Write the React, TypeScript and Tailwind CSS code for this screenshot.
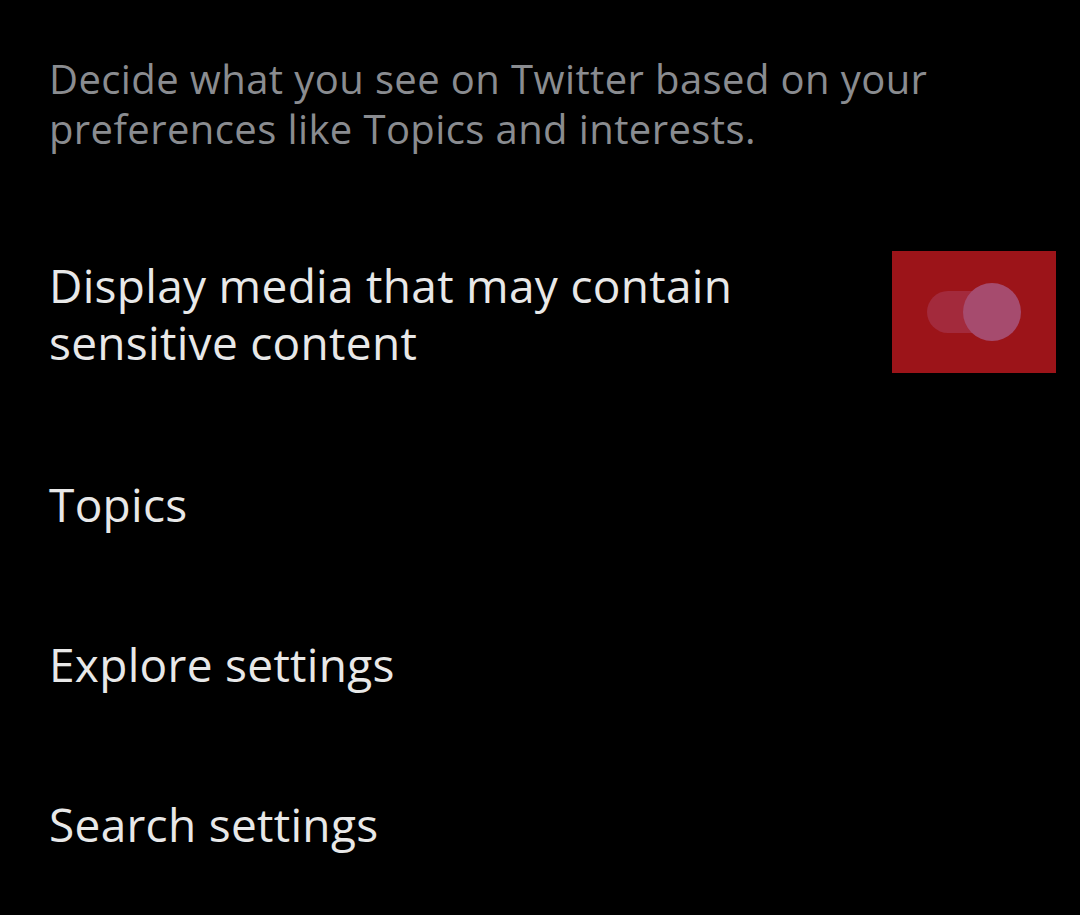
export default function App() {
  return (
    <div className="w-[1080px] h-[915px] bg-black overflow-hidden" style={{ fontFamily: '"Open Sans", "Noto Sans", sans-serif' }}>
      <div className="pl-[49px] pr-[24px] pt-[54px]">
        <p className="text-[40px] leading-[50px] tracking-[0.4px] text-[#8a8c90] w-[980px]">
          Decide what you see on Twitter based on your
          <br />
          preferences like Topics and interests.
        </p>
      </div>
      <div className="flex items-center pl-[49px] mt-[97px] h-[122px]">
        <div className="flex-1 text-[46px] leading-[57px] tracking-[0.3px] text-[#e8e8e8] pt-[4px]">
          Display media that may contain
          <br />
          sensitive content
        </div>
        <div className="w-[164px] h-[122px] bg-[#9c1419] mr-[24px] flex items-center justify-center">
          <div className="relative w-[64px] h-[42px] rounded-full bg-[#a32a3c] ml-[-30px]">
            <div className="absolute right-[-30px] top-[-8px] w-[58px] h-[58px] rounded-full bg-[#a64b6e]" />
          </div>
        </div>
      </div>
      <div className="flex flex-col pl-[49px] text-[46px] tracking-[0.3px] text-[#e8e8e8]">
        <div className="h-[160px] flex items-center mt-[51px]">Topics</div>
        <div className="h-[160px] flex items-center">Explore settings</div>
        <div className="h-[160px] flex items-center">Search settings</div>
      </div>
    </div>
  )
}
